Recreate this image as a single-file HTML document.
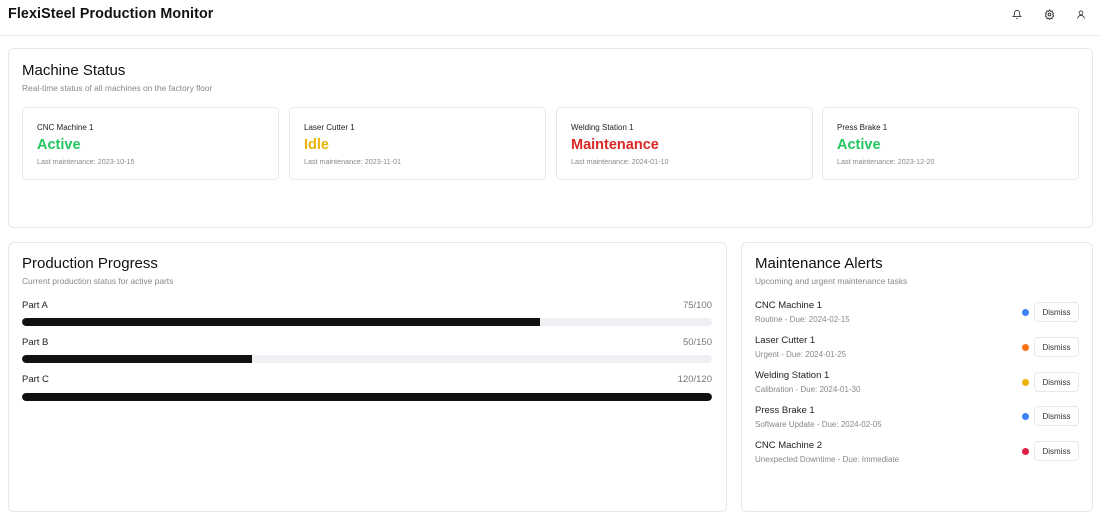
<!DOCTYPE html>
<html><head><meta charset="utf-8"><style>
*{box-sizing:border-box;margin:0;padding:0}
body{width:1100px;height:498px;overflow:hidden;background:#fff;font-family:"Liberation Sans",sans-serif;color:#111;position:relative}
.abs{position:absolute}
.hdr{left:0;top:0;width:1100px;height:36px;border-bottom:1px solid #ececec}
.title{left:8px;top:6px;font-size:14.3px;font-weight:bold;letter-spacing:0.1px}
.card{border:1px solid #e8e8e8;border-radius:6px;background:#fff}
h2{font-size:15px;font-weight:normal;color:#111}
.sub{font-size:8.4px;color:#888}
.m{position:absolute;top:107px;width:257px;height:73px;border:1px solid #e8e8e8;border-radius:5px}
.m .n{position:absolute;left:14px;top:15px;font-size:8px;color:#222}
.m .s{position:absolute;left:14px;top:29px;font-size:14.5px;font-weight:bold}
.m .d{position:absolute;left:14px;top:49px;font-size:7.2px;color:#888}
.lbl{left:22px;font-size:9.5px;color:#222}
.val{right:388px;font-size:9.5px;color:#777;text-align:right}
.bar{left:22px;width:690px;height:8px;background:#f0f0f4;border-radius:4px;overflow:hidden}
.bar div{height:8px;background:#111;border-radius:4px 0 0 4px}
.an{left:755px;font-size:9.5px;color:#222}
.as{left:755px;font-size:8px;color:#888}
.dot{left:1022px;width:7px;height:7px;border-radius:50%}
.btn{left:1034px;width:45px;height:20px;border:1px solid #e8e8e8;border-radius:4px;font-size:8px;color:#333;text-align:center;line-height:19px}
</style></head><body>
<div class="abs hdr"></div>
<div class="abs title">FlexiSteel Production Monitor</div>
<svg class="abs" style="left:1012px;top:9px" width="10" height="11" viewBox="0 0 24 24" fill="none" stroke="#333" stroke-width="2"><path d="M6 8a6 6 0 0 1 12 0c0 7 3 9 3 9H3s3-2 3-9"/><path d="M10.3 21a1.9 1.9 0 0 0 3.4 0"/></svg>
<svg class="abs" style="left:1044px;top:9px" width="11" height="11" viewBox="0 0 24 24" fill="none" stroke="#333" stroke-width="2"><circle cx="12" cy="12" r="3"/><path d="M12 2l2 3 3.5-1 .5 3.5 3 2-2 3 2 3-3 2-.5 3.5-3.5-1-2 3-2-3-3.5 1L6 17.5l-3-2 2-3-2-3 3-2L6.5 4l3.5 1z"/></svg>
<svg class="abs" style="left:1076px;top:9px" width="10" height="11" viewBox="0 0 24 24" fill="none" stroke="#333" stroke-width="2"><circle cx="12" cy="8" r="4.5"/><path d="M4 22a8 8 0 0 1 16 0"/></svg>

<div class="abs card" style="left:8px;top:48px;width:1085px;height:180px"></div>
<h2 class="abs" style="left:22px;top:62px">Machine Status</h2>
<div class="abs sub" style="left:22px;top:83px">Real-time status of all machines on the factory floor</div>
<div class="m" style="left:22px"><div class="n">CNC Machine 1</div><div class="s" style="color:#22c55e">Active</div><div class="d">Last maintenance: 2023-10-15</div></div>
<div class="m" style="left:289px"><div class="n">Laser Cutter 1</div><div class="s" style="color:#eab308">Idle</div><div class="d">Last maintenance: 2023-11-01</div></div>
<div class="m" style="left:556px"><div class="n">Welding Station 1</div><div class="s" style="color:#dc2626">Maintenance</div><div class="d">Last maintenance: 2024-01-10</div></div>
<div class="m" style="left:822px"><div class="n">Press Brake 1</div><div class="s" style="color:#22c55e">Active</div><div class="d">Last maintenance: 2023-12-20</div></div>

<div class="abs card" style="left:8px;top:242px;width:719px;height:270px"></div>
<h2 class="abs" style="left:22px;top:255px">Production Progress</h2>
<div class="abs sub" style="left:22px;top:276px">Current production status for active parts</div>
<div class="abs lbl" style="top:300px">Part A</div><div class="abs val" style="top:300px">75/100</div>
<div class="abs bar" style="top:318px"><div style="width:518px"></div></div>
<div class="abs lbl" style="top:337px">Part B</div><div class="abs val" style="top:337px">50/150</div>
<div class="abs bar" style="top:355px"><div style="width:230px"></div></div>
<div class="abs lbl" style="top:374px">Part C</div><div class="abs val" style="top:374px">120/120</div>
<div class="abs bar" style="top:393px"><div style="width:690px;border-radius:4px"></div></div>

<div class="abs card" style="left:741px;top:242px;width:352px;height:270px"></div>
<h2 class="abs" style="left:755px;top:255px">Maintenance Alerts</h2>
<div class="abs sub" style="left:755px;top:276px">Upcoming and urgent maintenance tasks</div>

<div class="abs an" style="top:300px">CNC Machine 1</div><div class="abs as" style="top:315px">Routine - Due: 2024-02-15</div>
<div class="abs dot" style="top:309px;background:#3b82f6"></div><div class="abs btn" style="top:302px">Dismiss</div>
<div class="abs an" style="top:335px">Laser Cutter 1</div><div class="abs as" style="top:350px">Urgent - Due: 2024-01-25</div>
<div class="abs dot" style="top:344px;background:#f97316"></div><div class="abs btn" style="top:337px">Dismiss</div>
<div class="abs an" style="top:370px">Welding Station 1</div><div class="abs as" style="top:385px">Calibration - Due: 2024-01-30</div>
<div class="abs dot" style="top:379px;background:#eab308"></div><div class="abs btn" style="top:372px">Dismiss</div>
<div class="abs an" style="top:405px">Press Brake 1</div><div class="abs as" style="top:420px">Software Update - Due: 2024-02-05</div>
<div class="abs dot" style="top:413px;background:#3b82f6"></div><div class="abs btn" style="top:406px">Dismiss</div>
<div class="abs an" style="top:440px">CNC Machine 2</div><div class="abs as" style="top:455px">Unexpected Downtime - Due: Immediate</div>
<div class="abs dot" style="top:448px;background:#e11d48"></div><div class="abs btn" style="top:441px">Dismiss</div>
</body></html>
